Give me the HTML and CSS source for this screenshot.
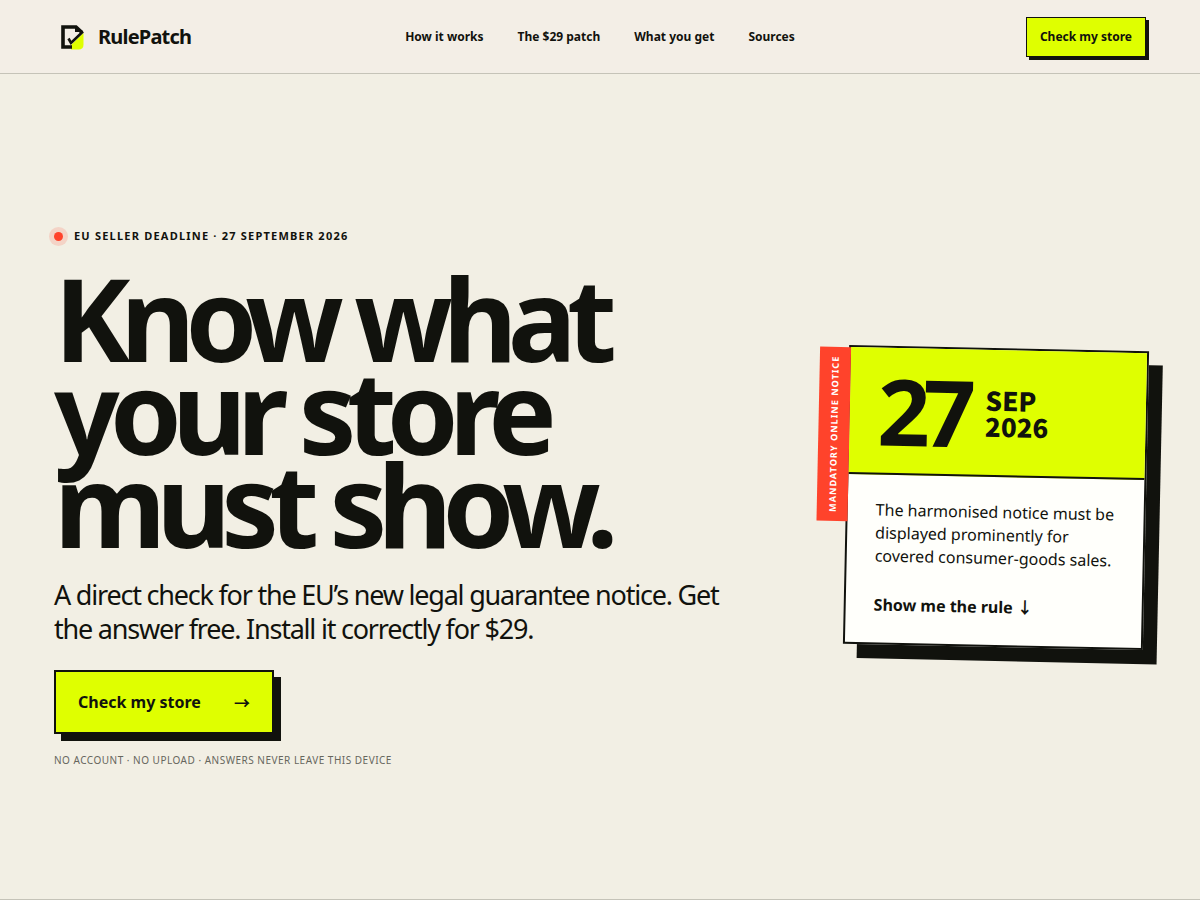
FILE: index.html
```html
<!DOCTYPE html>
<html lang="en">
  <head>
    <meta charset="utf-8">
    <meta name="viewport" content="width=device-width, initial-scale=1">
    <title>RulePatch</title>
    <link rel="stylesheet" href="styles.css">
  </head>
  <body>
    <header class="site-header">
      <a class="brand" href="#top">
        <svg class="brand-mark" viewBox="0 0 36 36" aria-hidden="true">
          <path d="M17 30.5 V26 L29.5 14 V25.5 Q29.5 30.5 24.5 30.5 Z" fill="#dfff00"/>
          <path d="M18 28 H9 V8 H22 L28 13.5" fill="none" stroke="#11120d" stroke-width="3.6"/>
          <path d="M21 8 V13 H29 Z" fill="#11120d"/>
          <path d="M14.5 19.5 L17 24 L29 12.5" fill="none" stroke="#11120d" stroke-width="2.6"/>
        </svg>
        <span>RulePatch</span>
      </a>
      <nav class="site-nav">
        <a href="#how">How it works</a>
        <a href="#patch">The $29 patch</a>
        <a href="#get">What you get</a>
        <a href="#sources">Sources</a>
      </nav>
      <a class="header-cta" href="#check">Check my store</a>
    </header>

    <main class="hero" id="top">
      <div class="hero-copy">
        <p class="eyebrow"><span class="dot"></span>EU seller deadline · 27 September 2026</p>
        <h1>Know what your store must show.</h1>
        <p class="lead">A direct check for the EU’s new legal guarantee notice. Get the answer free. Install it correctly for $29.</p>
        <a class="hero-cta" href="#check"><span>Check my store</span><span class="arrow">→</span></a>
        <p class="note">No account · No upload · Answers never leave this device</p>
      </div>

      <aside class="notice">
        <span class="notice-tab">Mandatory online notice</span>
        <div class="notice-date">
          <strong>27</strong>
          <span>SEP<br>2026</span>
        </div>
        <div class="notice-body">
          <p>The harmonised notice must be displayed prominently for covered consumer-goods sales.</p>
          <a href="#how">Show me the rule <span class="arrow">↓</span></a>
        </div>
      </aside>
    </main>
  </body>
</html>
```
FILE: styles.css
```css
:root {
  --ink: #11120d;
  --paper: #f2efe4;
  --lime: #dfff00;
  --red: #ff432b;
  --line: #c5c3b8;
}
* {
  box-sizing: border-box;
}
body {
  margin: 0;
  background: var(--paper);
  color: var(--ink);
  font-family: "Noto Sans", sans-serif;
}
a {
  color: inherit;
  text-decoration: none;
}
p, h1 {
  margin: 0;
}

/* header */
.site-header {
  display: grid;
  grid-template-columns: 1fr auto 1fr;
  align-items: center;
  height: 74px;
  padding: 0 54px;
  background: #f3eee6;
  border-bottom: 1px solid var(--line);
}
.brand {
  display: flex;
  align-items: center;
  gap: 8px;
  font-size: 20px;
  font-weight: 700;
  letter-spacing: -0.04em;
}
.brand-mark {
  width: 36px;
  height: 36px;
}
.site-nav {
  display: flex;
  gap: 34px;
  font-size: 12px;
  font-weight: 700;
}
.header-cta {
  justify-self: end;
  padding: 11px 13px;
  border: 1px solid var(--ink);
  background: var(--lime);
  box-shadow: 3px 3px 0 var(--ink);
  font-size: 12px;
  line-height: 16px;
  font-weight: 700;
}

/* hero */
.hero {
  display: grid;
  grid-template-columns: 1fr 300px;
  gap: 100px;
  align-items: center;
  min-height: calc(100vh - 74px);
  padding: 76px 54px 54px;
  border-bottom: 1px solid var(--line);
}
.eyebrow {
  display: flex;
  align-items: center;
  gap: 11px;
  font-size: 11px;
  line-height: 16px;
  font-weight: 700;
  letter-spacing: 0.11em;
  text-transform: uppercase;
}
.dot {
  width: 9px;
  height: 9px;
  border-radius: 50%;
  background: var(--red);
  box-shadow: 0 0 0 5px rgba(255, 67, 43, 0.16);
}
h1 {
  max-width: 640px;
  margin-top: 27px;
  font-size: 115px;
  line-height: 93px;
  font-weight: 700;
  letter-spacing: -0.085em;
}
.lead {
  max-width: 680px;
  margin-top: 28px;
  font-size: 27px;
  line-height: 34px;
  letter-spacing: -0.045em;
}
.hero-cta {
  display: flex;
  justify-content: space-between;
  align-items: center;
  width: 220px;
  height: 64px;
  margin-top: 24px;
  padding: 0 22px;
  border: 2px solid var(--ink);
  background: var(--lime);
  box-shadow: 7px 7px 0 var(--ink);
  font-size: 16px;
  line-height: 22px;
  font-weight: 700;
}
.arrow {
  font-family: "Noto Sans CJK JP", sans-serif;
}
.note {
  margin-top: 19px;
  color: #66665d;
  font-size: 10px;
  line-height: 14px;
  letter-spacing: 0.05em;
  text-transform: uppercase;
}

/* notice card */
.notice {
  position: relative;
  border: 2px solid var(--ink);
  background: #fffffb;
  box-shadow: 14px 14px 0 var(--ink);
  transform: rotate(1.2deg);
}
.notice-tab {
  position: absolute;
  top: 0;
  right: 100%;
  padding: 9px;
  background: var(--red);
  color: #fff;
  font-size: 9px;
  line-height: 13px;
  font-weight: 700;
  letter-spacing: 0.12em;
  text-transform: uppercase;
  white-space: nowrap;
  writing-mode: vertical-rl;
  rotate: 180deg;
}
.notice-date {
  display: flex;
  align-items: center;
  gap: 17px;
  height: 127px;
  padding: 0 28px;
  background: var(--lime);
  border-bottom: 2px solid var(--ink);
}
.notice-date strong {
  font-size: 92px;
  line-height: 76px;
  letter-spacing: -0.08em;
}
.notice-date span {
  font-family: "Noto Sans CJK JP", sans-serif;
  font-size: 26px;
  line-height: 26px;
  font-weight: 900;
}
.notice-body {
  padding: 24px 28px 26px;
  font-size: 16px;
  line-height: 23px;
}
.notice-body a {
  display: block;
  margin-top: 25px;
  font-weight: 700;
}
```
